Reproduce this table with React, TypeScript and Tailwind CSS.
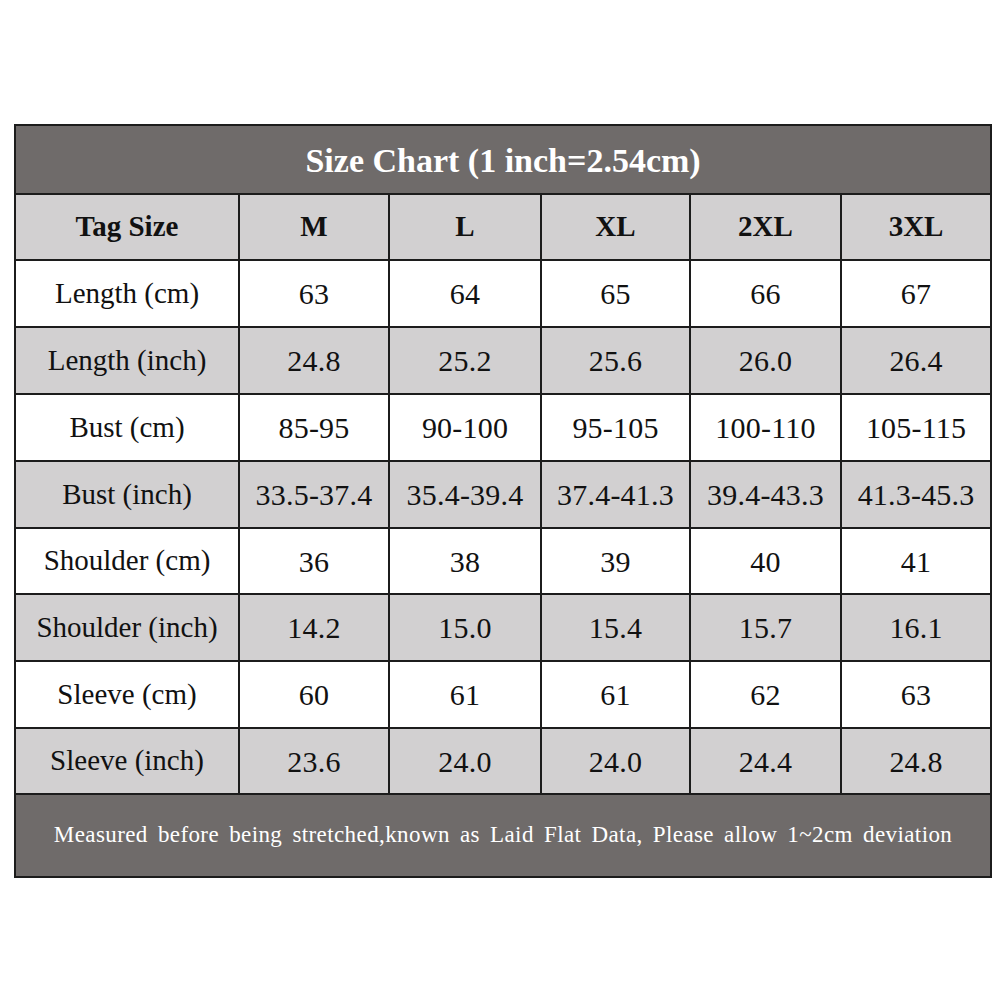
const sizes = ["M", "L", "XL", "2XL", "3XL"];

const rows: [string, string[]][] = [
  ["Length (cm)", ["63", "64", "65", "66", "67"]],
  ["Length (inch)", ["24.8", "25.2", "25.6", "26.0", "26.4"]],
  ["Bust (cm)", ["85-95", "90-100", "95-105", "100-110", "105-115"]],
  ["Bust (inch)", ["33.5-37.4", "35.4-39.4", "37.4-41.3", "39.4-43.3", "41.3-45.3"]],
  ["Shoulder (cm)", ["36", "38", "39", "40", "41"]],
  ["Shoulder (inch)", ["14.2", "15.0", "15.4", "15.7", "16.1"]],
  ["Sleeve (cm)", ["60", "61", "61", "62", "63"]],
  ["Sleeve (inch)", ["23.6", "24.0", "24.0", "24.4", "24.8"]],
];

const rowHeights = ["h-[67px]", "h-[67px]", "h-[67px]", "h-[67px]", "h-[66px]", "h-[67px]", "h-[67px]", "h-[66px]"];

export default function App() {
  return (
    <div className="w-[1001px] h-[1001px] bg-white pt-[124px] pl-[14px] font-serif">
      <table className="border-collapse border-2 border-[#1c1c1c] w-[976px] table-fixed text-[#111] font-[Liberation_Serif]">
        <colgroup>
          <col className="w-[224px]" />
          <col className="w-[150px]" />
          <col className="w-[152px]" />
          <col className="w-[149px]" />
          <col className="w-[151px]" />
          <col className="w-[150px]" />
        </colgroup>
        <tbody>
          {/* titulo */}
          <tr className="h-[69px] bg-[#6f6b6a]">
            <td colSpan={6} className="border-2 border-[#1c1c1c] text-center text-white font-bold text-[34px] pt-[1px]">
              Size Chart (1 inch=2.54cm)
            </td>
          </tr>
          <tr className="h-[66px] bg-[#d2d0d1]">
            <td className="border-2 border-[#1c1c1c] text-center font-bold text-[29px]">Tag Size</td>
            {sizes.map((s) => (
              <td key={s} className="border-2 border-[#1c1c1c] text-center font-bold text-[29px]">
                {s}
              </td>
            ))}
          </tr>
          {rows.map(([label, vals], i) => (
            <tr key={label} className={`${rowHeights[i]} ${i % 2 === 0 ? "bg-white" : "bg-[#d2d0d1]"}`}>
              <td className="border-2 border-[#1c1c1c] text-center text-[29px] whitespace-nowrap">{label}</td>
              {vals.map((v, j) => (
                <td key={j} className="border-2 border-[#1c1c1c] text-center text-[30px] tracking-[0.2px] whitespace-nowrap">
                  {v}
                </td>
              ))}
            </tr>
          ))}
          {/* rodape */}
          <tr className="h-[83px] bg-[#6f6b6a]">
            <td colSpan={6} className="border-2 border-[#1c1c1c] text-center text-white text-[23px] tracking-[0.4px] [word-spacing:4px]">
              Measured before being stretched,known as Laid Flat Data, Please allow 1~2cm deviation
            </td>
          </tr>
        </tbody>
      </table>
    </div>
  );
}
